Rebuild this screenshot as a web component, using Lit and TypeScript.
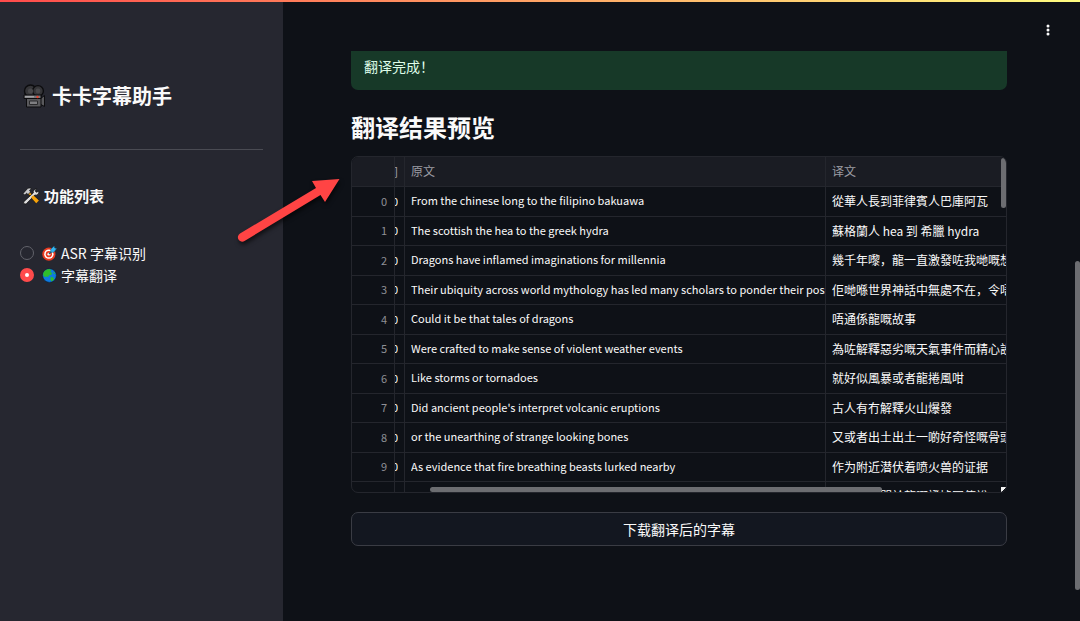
import { LitElement, html, css, svg } from "lit";
import { customElement, property, state } from "lit/decorators.js";

interface Line {
  source: string;
  target: string;
}

const LINES: Line[] = [
  { source: "From the chinese long to the filipino bakuawa", target: "從華人長到菲律賓人巴庫阿瓦" },
  { source: "The scottish the hea to the greek hydra", target: "蘇格蘭人 hea 到 希臘 hydra" },
  { source: "Dragons have inflamed imaginations for millennia", target: "幾千年嚟，龍一直激發咗我哋嘅想像" },
  { source: "Their ubiquity across world mythology has led many scholars to ponder their possible", target: "佢哋喺世界神話中無處不在，令唔少" },
  { source: "Could it be that tales of dragons", target: "唔通係龍嘅故事" },
  { source: "Were crafted to make sense of violent weather events", target: "為咗解釋惡劣嘅天氣事件而精心設計" },
  { source: "Like storms or tornadoes", target: "就好似風暴或者龍捲風咁" },
  { source: "Did ancient people's interpret volcanic eruptions", target: "古人有冇解釋火山爆發" },
  { source: "or the unearthing of strange looking bones", target: "又或者出土出土一啲好奇怪嘅骨頭" },
  { source: "As evidence that fire breathing beasts lurked nearby", target: "作为附近潜伏着喷火兽的证据" },
  { source: "", target: "然後得到關於龍嘅證據同傳說" },
];

const camera = svg`
  <circle cx="8.5" cy="7" r="6" fill="#353538" stroke="#0c0c0e" stroke-width="1.4"/>
  <circle cx="16" cy="7" r="5.4" fill="#353538" stroke="#0c0c0e" stroke-width="1.4"/>
  <circle cx="8.5" cy="7" r="2.6" fill="#48484b"/><circle cx="16" cy="7" r="2.4" fill="#48484b"/>
  <path d="M18 15l4.500-3.500v11L18 20z" fill="#59595c" stroke="#0c0c0e"/>
  <path d="M4.500 12h14.500v11H4.500z" fill="#59595c" stroke="#0c0c0e"/>
  <path d="M2 11h17v3.500H2z" fill="#77777a" stroke="#0c0c0e"/>
  <path d="M7.500 17h8v3.500h-8z" fill="#7f7f82" stroke="#2a2a2c"/>
  <path d="M3 12.800h9" stroke="#b5b5b8"/><circle cx="15.500" cy="13" r="1.200" fill="#e8412c"/>`;

const tools = svg`
  <path d="M6.500 7l11.500 14 4-3.500L9 5.500z" fill="#f5a20b" stroke="#111" stroke-width="1"/>
  <path d="M1.500 8.500L7.500 2c2-1 4-.8 5.500.2L10 4.500l1.500 2L8 10 6 8.300 4 11z" fill="#c9c9cc" stroke="#111" stroke-width="1"/>
  <path d="M2.500 19.500L15 8c-.5-3 1-5.500 4.500-5.800L17.500 5l1.500 2 3.500-1.500c.5 3.500-2 6-5.500 5.300L5.500 22.500c-2 .8-4-1-3-3z" fill="#dededf" stroke="#111" stroke-width="1"/>
  <path d="M12 13.500l7 8 3.500-3.500-7.500-7z" fill="#f5a20b"/>`;

const target = svg`
  <circle cx="11" cy="13" r="10.500" fill="#e8391f"/><circle cx="11" cy="13" r="7.500" fill="#fff"/>
  <circle cx="11" cy="13" r="5" fill="#e8391f"/><circle cx="11" cy="13" r="2.300" fill="#fff"/>
  <path d="M11 13l7-7" stroke="#14506e" stroke-width="1.800"/>
  <path d="M14 10V5l5.500-5 .8 3.200 3.200.8L19 10z" fill="#35b6f2" stroke="#14506e" stroke-width=".8"/>`;

const globe = svg`
  <circle cx="12" cy="12" r="11" fill="#0e7ae0" stroke="#08233e" stroke-width="1"/>
  <path d="M2 8C4 4 8 1.500 12 1.500l3 2-2 3 3 1-1 3.500-4 .5-1 3-3-1-3 1-2-3z" fill="#2fbd2b"/>
  <path d="M14 14l4 1 1.500 3-4 3.500-2-3z" fill="#2fbd2b"/><path d="M18 5l3.500 4-2.500.5z" fill="#2fbd2b"/>`;

@customElement("subtitle-table")
class SubtitleTable extends LitElement {
  @property({ attribute: false }) lines: Line[] = [];

  static styles = css`
    :host {
      display: block;
      position: relative;
      height: 335px;
      overflow: hidden;
      border: 1px solid #24262d;
      border-radius: 7px;
    }
    .grid {
      width: 100%;
      border-collapse: separate;
      border-spacing: 0;
      table-layout: fixed;
      font-size: 12px;
      line-height: 18px;
      color: #fafafa;
    }
    .index { width: 43px; }
    .time { width: 10px; }
    .source { width: 421px; }
    .cell {
      box-sizing: border-box;
      height: 30px;
      padding: 0 6px;
      border-right: 1px solid #24262d;
      border-bottom: 1px solid #24262d;
      overflow: hidden;
      white-space: nowrap;
      text-align: left;
      font-weight: 400;
    }
    .row:nth-child(even) .cell { height: 29px; }
    .head { background: #1a1c23; color: #9c9da3; }
    .cell:last-child { padding-right: 0; border-right: 0; }
    .small { padding-bottom: 2px; font-size: 11px; }
    .number { padding-right: 7px; padding-left: 7px; text-align: right; color: #8f9096; }
    .cut { padding-right: 6px; padding-left: 0; }
    .clip { display: flex; justify-content: flex-end; overflow: hidden; }
    .text { overflow: hidden; padding-bottom: 1px; }
    .source-cell { padding-right: 0; }
    .thumb { position: absolute; background: #6c6d71; border-radius: 3px; }
    .vertical { top: 1px; right: 0; width: 5px; height: 50px; }
    .horizontal { bottom: 0; left: 12%; width: 69%; height: 5px; }
    .corner {
      position: absolute;
      right: 0;
      bottom: 0;
      width: 5px;
      height: 5px;
      background: linear-gradient(135deg, #f4f4f4 55%, #0e1117 56%);
    }
  `;

  render() {
    return html`
      <table class="grid">
        <colgroup><col class="index" /><col class="time" /><col class="source" /><col /></colgroup>
        <thead>
          <tr>
            <th class="cell head number"></th>
            <th class="cell head cut"><div class="clip"><span>间</span></div></th>
            <th class="cell head"><div class="text">原文</div></th>
            <th class="cell head"><div class="text">译文</div></th>
          </tr>
        </thead>
        <tbody>
          ${this.lines.map(
            (line, i) => html`<tr class="row">
              <td class="cell small number">${i < 10 ? i : ""}</td>
              <td class="cell small cut"><div class="clip"><span>${i < 10 ? "0" : ""}</span></div></td>
              <td class="cell small source-cell"><div class="text">${line.source}</div></td>
              <td class="cell"><div class="text">${line.target}</div></td>
            </tr>`
          )}
        </tbody>
      </table>
      <div class="thumb horizontal"></div>
      <div class="corner"></div>
      <div class="thumb vertical"></div>
    `;
  }
}

@customElement("app-root")
class AppRoot extends LitElement {
  @state() private mode = "translate";

  static styles = css`
    :host {
      display: block;
      position: relative;
      min-height: 100vh;
      overflow: hidden;
      background: #0e1117;
      color: #fafafa;
      font-family: "Noto Sans CJK SC", "Noto Sans", sans-serif;
      font-size: 14px;
      line-height: 22px;
    }
    .stripe {
      position: absolute;
      top: 0;
      left: 0;
      right: 0;
      height: 2px;
      background: linear-gradient(90deg, #ff4b4b, #fffd80);
    }
    .layout { display: grid; grid-template-columns: 283px 1fr; min-height: 100vh; }
    .sidebar { padding: 80px 20px 0; background: #262730; }
    .brand, .section { display: flex; align-items: center; margin: 0; padding-left: 2px; font-weight: 700; }
    .brand { gap: 6px; font-size: 20px; line-height: 32px; }
    .section { gap: 4px; font-size: 15px; line-height: 24px; }
    .rule { height: 1px; margin: 37px 0 34px; border: 0; background: #4a4b53; }
    .icon { flex: none; display: block; }
    .choices { margin: 34px 0 0; padding: 0; border: 0; }
    .choice { display: flex; align-items: center; height: 22px; }
    .radio {
      appearance: none;
      box-sizing: border-box;
      width: 14px;
      height: 14px;
      margin: 0 8px 0 0;
      border: 1px solid #62636b;
      border-radius: 50%;
    }
    .radio:checked { border: 5px solid #ff4b4b; background: #fff; }
    .choice .icon { margin-right: 4px; }
    .main { display: flex; flex-direction: column; padding: 0 73px 40px 68px; }
    .top { display: flex; justify-content: flex-end; align-items: center; height: 51px; margin-right: -49px; }
    .menu { display: flex; justify-content: center; width: 16px; margin-top: 8px; padding: 0; border: 0; background: none; color: #fafafa; }
    .success {
      padding: 4px 13px 13px;
      border-radius: 0 0 7px 7px;
      background: #173928;
      color: #dffde9;
    }
    .title { margin: 19px 0 11px; font-size: 24px; line-height: 36px; font-weight: 700; }
    .download {
      height: 34px;
      margin-top: 19px;
      border: 1px solid #3a3c44;
      border-radius: 7px;
      background: #131720;
      color: inherit;
      font: inherit;
    }
    .page-thumb {
      position: absolute;
      right: 0;
      top: 42%;
      width: 5px;
      height: 53%;
      border-radius: 3px;
      background: #6c6d71;
    }
    .arrow { position: absolute; left: 230px; top: 170px; filter: drop-shadow(1px 3px 2px rgb(0 0 0 / 60%)); }
  `;

  private option(value: string, label: string, icon: unknown) {
    return html`<label class="choice">
      <input class="radio" type="radio" name="mode" .checked=${this.mode === value} @change=${() => (this.mode = value)} />
      <svg class="icon" width="15" height="15" viewBox="0 0 24 24">${icon}</svg>
      <span>${label}</span>
    </label>`;
  }

  render() {
    return html`
      <div class="layout">
        <aside class="sidebar">
          <h1 class="brand"><svg class="icon" width="24" height="24" viewBox="0 0 24 24">${camera}</svg>卡卡字幕助手</h1>
          <hr class="rule" />
          <h2 class="section"><svg class="icon" width="18" height="18" viewBox="0 0 24 24">${tools}</svg>功能列表</h2>
          <fieldset class="choices" aria-label="功能列表">
            ${this.option("asr", "ASR 字幕识别", target)}
            ${this.option("translate", "字幕翻译", globe)}
          </fieldset>
        </aside>
        <main class="main">
          <header class="top">
            <button class="menu" aria-label="Menu">
              <svg width="4" height="12" viewBox="0 0 4 12" fill="currentColor"><circle cx="2" cy="2" r="1.500" /><circle cx="2" cy="6" r="1.500" /><circle cx="2" cy="10" r="1.500" /></svg>
            </button>
          </header>
          <div class="success" role="status">翻译完成！</div>
          <h2 class="title">翻译结果预览</h2>
          <subtitle-table .lines=${LINES}></subtitle-table>
          <button class="download">下载翻译后的字幕</button>
        </main>
      </div>
      <div class="stripe"></div>
      <div class="page-thumb"></div>
      <svg class="arrow" width="116" height="80" viewBox="0 0 116 80">
        <path d="M109.500 9L82 11l4 7L10 63.500a4.300 4.300 0 0 0 4.500 7.500L90.500 25l4.500 7z" fill="#ff4444" />
      </svg>
    `;
  }
}
